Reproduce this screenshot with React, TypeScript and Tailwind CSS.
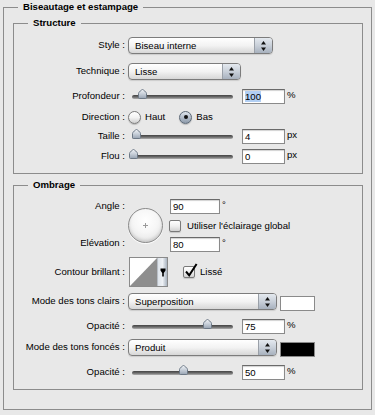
import React from "react";

const NB = "\u00a0";

function Label({ children, className = "" }: { children: React.ReactNode; className?: string }) {
  return <div className={`w-[111px] shrink-0 text-right whitespace-nowrap ${className}`}>{children}</div>;
}

function Arrows() {
  return (
    <svg width="5" height="10" viewBox="0 0 5 10">
      <path d="M2.5 0 L5 3.6 L0 3.6 Z" fill="#111" />
      <path d="M0 6.4 L5 6.4 L2.5 10 Z" fill="#111" />
    </svg>
  );
}

function Select({ text, wClass }: { text: string; wClass: string }) {
  return (
    <div
      className={`flex h-[17px] ${wClass} rounded-[4px] border border-[#7c7c7c] bg-gradient-to-b from-[#ffffff] via-[#f3f3f3] to-[#d7d7d7] shadow-[0_1px_1px_rgba(0,0,0,0.12)]`}
    >
      <div className="flex-1 pl-[6px] leading-[15px] whitespace-nowrap overflow-hidden">{text}</div>
      <div className="flex w-[18px] items-center justify-center rounded-r-[3px] border-l border-[#9aa0a8] bg-gradient-to-b from-[#e4e9ef] via-[#c9d0d9] to-[#a7b1be]">
        <Arrows />
      </div>
    </div>
  );
}

function Thumb() {
  return (
    <svg width="9" height="10" viewBox="0 0 9 10">
      <defs>
        <linearGradient id="thumbg" x1="0" y1="0" x2="0" y2="1">
          <stop offset="0" stopColor="#f1f4f7" />
          <stop offset="0.5" stopColor="#c6ced8" />
          <stop offset="1" stopColor="#98a4b3" />
        </linearGradient>
      </defs>
      <path
        d="M4.5 0.5 C5.3 0.5 8.5 3.4 8.5 4.4 L8.5 8.5 Q8.5 9.5 7.5 9.5 L1.5 9.5 Q0.5 9.5 0.5 8.5 L0.5 4.4 C0.5 3.4 3.7 0.5 4.5 0.5 Z"
        fill="url(#thumbg)"
        stroke="#6c7886"
        strokeWidth="1"
      />
    </svg>
  );
}

function Slider({ pct }: { pct: number }) {
  return (
    <div className="relative flex h-[15px] w-[114px] shrink-0 items-start">
      <div className="ml-[4px] mt-[6px] h-[4px] w-[101px] rounded-full bg-gradient-to-b from-[#444444] via-[#6a6a6a] to-[#b0b0b0]" />
      <div className="absolute top-0 flex" style={{ left: pct + 0.5 }}>
        <Thumb />
      </div>
    </div>
  );
}

function Field({ children, wClass = "w-[43px]" }: { children: React.ReactNode; wClass?: string }) {
  return (
    <div
      className={`h-[15px] ${wClass} shrink-0 border border-[#8a8a8a] border-t-[#6a6a6a] bg-white pl-[2px] leading-[13px] shadow-[inset_0_1px_1px_rgba(0,0,0,0.18)]`}
    >
      {children}
    </div>
  );
}

function Unit({ children }: { children: React.ReactNode }) {
  return <div className="ml-[2px] self-start leading-[12px]">{children}</div>;
}

function Radio({ checked }: { checked?: boolean }) {
  if (checked) {
    return (
      <div className="flex h-[13px] w-[13px] shrink-0 items-center justify-center rounded-full border border-[#5c6876] bg-gradient-to-b from-[#dfe5ec] via-[#b3bdca] to-[#8e9bab] shadow-[0_1px_1px_rgba(0,0,0,0.2)]">
        <div className="h-[4px] w-[4px] rounded-full bg-[#111]" />
      </div>
    );
  }
  return (
    <div className="h-[13px] w-[13px] shrink-0 rounded-full border border-[#7a7a7a] bg-gradient-to-b from-[#ffffff] via-[#f2f2f2] to-[#cfcfcf] shadow-[0_1px_1px_rgba(0,0,0,0.2)]" />
  );
}

function Checkbox({ checked }: { checked?: boolean }) {
  return (
    <div className="relative h-[12px] w-[12px] shrink-0 rounded-[2px] border border-[#7a7a7a] bg-gradient-to-b from-[#ffffff] via-[#f0f0f0] to-[#d2d2d2] shadow-[0_1px_1px_rgba(0,0,0,0.15)]">
      {checked && (
        <svg className="absolute left-[0px] top-[-4px]" width="15" height="15" viewBox="0 0 15 15">
          <path d="M2 8.5 L5.2 12.4 L12.6 1" stroke="#000" strokeWidth="2" fill="none" strokeLinejoin="miter" />
        </svg>
      )}
    </div>
  );
}

function Dial() {
  return (
    <div className="flex h-[35px] w-[35px] shrink-0 items-center justify-center rounded-full border border-[#8a8a8a] bg-[radial-gradient(circle_at_50%_35%,#ffffff_0%,#f6f6f6_45%,#dcdcdc_100%)] shadow-[inset_0_-2px_3px_rgba(0,0,0,0.12),0_1px_1px_rgba(255,255,255,0.9)]">
      <svg width="5" height="5" viewBox="0 0 5 5">
        <path d="M2.5 0 V5 M0 2.5 H5" stroke="#9a9a9a" strokeWidth="1" />
      </svg>
    </div>
  );
}

function Contour() {
  return (
    <div className="flex h-[30px] w-[39px] shrink-0 border border-[#8a8a8a] bg-white">
      <svg width="27" height="28" viewBox="0 0 27 28" className="shrink-0">
        <polygon points="0,28 27,0 27,28" fill="#8e8e8e" />
      </svg>
      <div className="flex flex-1 items-center justify-center border-l border-[#b8bec6] bg-gradient-to-r from-[#dde3ea] via-[#eef1f5] to-[#aab4c0]">
        <svg width="6" height="9" viewBox="0 0 6 9">
          <path d="M0.5 0.5 L5.5 0.5 L5.5 2.5 L3.8 5 L3.8 8.5 L2.2 8.5 L2.2 5 L0.5 2.5 Z" fill="#000" />
        </svg>
      </div>
    </div>
  );
}

export default function App() {
  return (
    <div className="h-[415px] w-[375px] bg-[#e8e8e8] font-['Liberation_Sans',Arial,sans-serif] text-[9.6px] text-black">
      <fieldset className="ml-[3px] w-[369px] border border-[#8c8c8c] pb-[19px] pl-[9px] pr-[8px] pt-[2px]">
        <legend className="ml-[5px] px-[5px] font-bold leading-[14px]">Biseautage et estampage</legend>

        <fieldset className="w-[350px] border border-[#8c8c8c] pb-[9px] pt-[7px]">
          <legend className="ml-[14px] px-[5px] font-bold leading-[14px]">Structure</legend>

          <div className="flex h-[17px] items-center">
            <Label>Style{NB}:</Label>
            <div className="ml-[3px]">
              <Select text="Biseau interne" wClass="w-[145px]" />
            </div>
          </div>

          <div className="mt-[9px] flex h-[17px] items-center">
            <Label>Technique{NB}:</Label>
            <div className="ml-[3px]">
              <Select text="Lisse" wClass="w-[113px]" />
            </div>
          </div>

          <div className="mt-[9px] flex h-[15px] items-center">
            <Label>Profondeur{NB}:</Label>
            <div className="ml-[3px] flex items-center">
              <Slider pct={9} />
              <Field>
                <span className="bg-[#b2cff3]">100</span>
              </Field>
              <Unit>%</Unit>
            </div>
          </div>

          <div className="mt-[6px] flex h-[14px] items-center">
            <Label>Direction{NB}:</Label>
            <div className="ml-[3px] flex items-center">
              <Radio />
              <span className="ml-[4px]">Haut</span>
              <div className="ml-[14px]">
                <Radio checked />
              </div>
              <span className="ml-[4px]">Bas</span>
            </div>
          </div>

          <div className="mt-[5px] flex h-[15px] items-center">
            <Label>Taille{NB}:</Label>
            <div className="ml-[3px] flex items-center">
              <Slider pct={3} />
              <Field>4</Field>
              <Unit>px</Unit>
            </div>
          </div>

          <div className="mt-[5px] flex h-[15px] items-center">
            <Label>Flou{NB}:</Label>
            <div className="ml-[3px] flex items-center">
              <Slider pct={0} />
              <Field>0</Field>
              <Unit>px</Unit>
            </div>
          </div>
        </fieldset>

        <fieldset className="mt-[4px] w-[350px] border border-[#8c8c8c] pb-[9px] pt-[7px]">
          <legend className="ml-[14px] px-[5px] font-bold leading-[14px]">Ombrage</legend>

          <div className="flex h-[53px] items-start">
            <div className="flex w-[111px] shrink-0 flex-col text-right">
              <div className="mt-[-1px] leading-[15px]">Angle{NB}:</div>
              <div className="mt-[22px] leading-[15px]">Elévation{NB}:</div>
            </div>
            <div className="ml-[3px] mt-[9px]">
              <Dial />
            </div>
            <div className="ml-[7px] flex flex-col">
              <div className="flex items-center">
                <Field wClass="w-[50px]">90</Field>
                <Unit>°</Unit>
              </div>
              <div className="mt-[6px] flex h-[12px] items-center">
                <div className="ml-[-1px]">
                  <Checkbox />
                </div>
                <span className="ml-[6px] whitespace-nowrap">Utiliser l'éclairage global</span>
              </div>
              <div className="mt-[5px] flex items-center">
                <Field wClass="w-[50px]">80</Field>
                <Unit>°</Unit>
              </div>
            </div>
          </div>

          <div className="mt-[5px] flex h-[30px] items-center">
            <Label>Contour brillant{NB}:</Label>
            <div className="ml-[4px]">
              <Contour />
            </div>
            <div className="ml-[15px]">
              <Checkbox checked />
            </div>
            <span className="ml-[5px]">Lissé</span>
          </div>

          <div className="mt-[6px] flex h-[17px] items-center">
            <Label>Mode des tons clairs{NB}:</Label>
            <div className="ml-[3px]">
              <Select text="Superposition" wClass="w-[149px]" />
            </div>
            <div className="ml-[3px] mt-[4px] h-[15px] w-[35px] border border-[#8a8a8a] bg-white" />
          </div>

          <div className="mt-[9px] flex h-[15px] items-center">
            <Label>Opacité{NB}:</Label>
            <div className="ml-[3px] flex items-center">
              <Slider pct={74} />
              <Field>75</Field>
              <Unit>%</Unit>
            </div>
          </div>

          <div className="mt-[5px] flex h-[17px] items-center">
            <Label>Mode des tons foncés{NB}:</Label>
            <div className="ml-[3px]">
              <Select text="Produit" wClass="w-[149px]" />
            </div>
            <div className="ml-[3px] mt-[4px] h-[15px] w-[35px] border border-[#8a8a8a] bg-black" />
          </div>

          <div className="mt-[9px] flex h-[15px] items-center">
            <Label>Opacité{NB}:</Label>
            <div className="ml-[3px] flex items-center">
              <Slider pct={50} />
              <Field>50</Field>
              <Unit>%</Unit>
            </div>
          </div>
        </fieldset>
      </fieldset>
    </div>
  );
}
